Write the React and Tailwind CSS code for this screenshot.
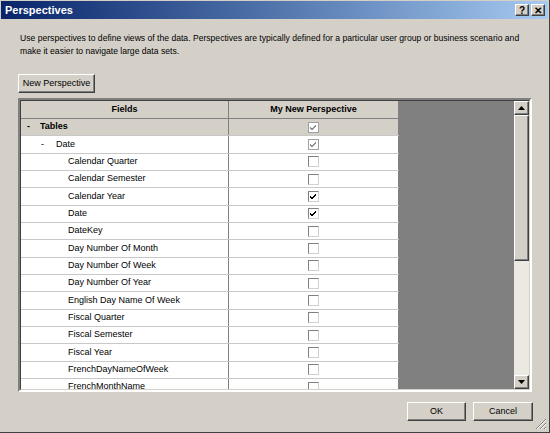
import React from 'react'

const rows = [
  { label: 'Tables', level: 0, toggle: true, state: 'grey' },
  { label: 'Date', level: 1, toggle: true, state: 'grey' },
  { label: 'Calendar Quarter', level: 2, state: 'off' },
  { label: 'Calendar Semester', level: 2, state: 'off' },
  { label: 'Calendar Year', level: 2, state: 'on' },
  { label: 'Date', level: 2, state: 'on' },
  { label: 'DateKey', level: 2, state: 'off' },
  { label: 'Day Number Of Month', level: 2, state: 'off' },
  { label: 'Day Number Of Week', level: 2, state: 'off' },
  { label: 'Day Number Of Year', level: 2, state: 'off' },
  { label: 'English Day Name Of Week', level: 2, state: 'off' },
  { label: 'Fiscal Quarter', level: 2, state: 'off' },
  { label: 'Fiscal Semester', level: 2, state: 'off' },
  { label: 'Fiscal Year', level: 2, state: 'off' },
  { label: 'FrenchDayNameOfWeek', level: 2, state: 'off' },
  { label: 'FrenchMonthName', level: 2, state: 'off' },
]

function Check({ state }) {
  const grey = state === 'grey'
  return (
    <div
      className={
        'w-[11px] h-[11px] border flex items-center justify-center bg-white ' +
        (grey ? 'border-[#a0a0a0]' : 'border-[#808080] border-r-[#d0d0d0] border-b-[#d0d0d0]')
      }
    >
      {state !== 'off' && (
        <svg width="9" height="9" viewBox="0 0 9 9">
          <path
            d="M1 4 L3 6 L7 2 M1 5 L3 7 L7 3"
            fill="none"
            stroke={grey ? '#8c8c8c' : '#000'}
            strokeWidth="1"
          />
        </svg>
      )}
    </div>
  )
}

function WinButton({ children, className = '' }) {
  return (
    <div
      className={
        'flex items-center justify-center bg-[#d4d0c8] border border-t-white border-l-white border-r-[#404040] border-b-[#404040] shadow-[inset_-1px_-1px_0_#808080] text-[9px] text-black ' +
        className
      }
    >
      {children}
    </div>
  )
}

export default function App() {
  return (
    <div
      className="w-[550px] h-[433px] bg-[#d4d0c8] flex flex-col border-r border-b border-[#404040] overflow-hidden relative"
      style={{ fontFamily: '"Liberation Sans", Arial, sans-serif' }}
    >
      {/* title bar */}
      <div className="h-[18px] mx-[1px] mt-[1px] bg-gradient-to-r from-[#0a246a] to-[#a6caf0] flex items-center justify-between pl-[4px] pr-[3px]">
        <span className="text-white font-bold text-[11px]">Perspectives</span>
        <div className="flex gap-[2px]">
          <WinButton className="w-[14px] h-[12px] font-bold text-[10px]">?</WinButton>
          <WinButton className="w-[14px] h-[12px] font-bold text-[10px]">✕</WinButton>
        </div>
      </div>

      <div className="pl-[20px] pr-[16px] pt-[13px] text-[8.6px] leading-[13px] text-black">
        Use perspectives to define views of the data. Perspectives are typically defined for a particular user group or business scenario and
        make it easier to navigate large data sets.
      </div>

      <div className="px-[18px] mt-[16px]">
        <WinButton className="w-[77px] h-[19px]">New Perspective</WinButton>
      </div>

      {/* grid */}
      <div className="ml-[18px] mt-[5px] w-[514px] h-[294px] border-2 border-t-[#808080] border-l-[#808080] border-r-white border-b-white">
        <div className="w-full h-full flex border border-t-[#404040] border-l-[#404040] border-r-[#d4d0c8] border-b-[#d4d0c8] overflow-hidden">
          <div className="w-[378px] flex flex-col">
            <div className="h-[18px] flex shrink-0 bg-[#d4d0c8] border-b border-[#808080]">
              <div className="w-[208px] flex items-center justify-center font-bold text-[9px] border-r border-[#808080]">
                Fields
              </div>
              <div className="flex-1 flex items-center justify-center font-bold text-[9px] border-r border-[#808080]">
                My New Perspective
              </div>
            </div>
            {rows.map((r, i) => (
              <div
                key={i}
                className={
                  'h-[17.33px] flex shrink-0 border-b border-[#c8c8c8] text-[9px] ' +
                  (r.level === 0 ? 'bg-[#d4d0c8]' : 'bg-white')
                }
              >
                <div className="w-[208px] flex items-center border-r border-[#808080]">
                  {r.level === 0 && (
                    <>
                      <span className="w-[19px] pl-[6px] font-bold">-</span>
                      <span className="font-bold">{r.label}</span>
                    </>
                  )}
                  {r.level === 1 && (
                    <>
                      <span className="w-[35px] pl-[20px]">-</span>
                      <span>{r.label}</span>
                    </>
                  )}
                  {r.level === 2 && <span className="pl-[47px]">{r.label}</span>}
                </div>
                <div className="flex-1 flex items-center justify-center border-r border-[#808080]">
                  <Check state={r.state} />
                </div>
              </div>
            ))}
          </div>
          <div className="flex-1 bg-[#808080]" />
          {/* scrollbar */}
          <div className="w-[15px] flex flex-col bg-[#ece9e2]">
            <WinButton className="h-[14px] shrink-0">
              <svg width="7" height="4" viewBox="0 0 7 4">
                <path d="M3.5 0 L7 4 L0 4 Z" fill="#000" />
              </svg>
            </WinButton>
            <WinButton className="h-[146px] shrink-0" />
            <div className="flex-1" />
            <WinButton className="h-[14px] shrink-0">
              <svg width="7" height="4" viewBox="0 0 7 4">
                <path d="M0 0 L7 0 L3.5 4 Z" fill="#000" />
              </svg>
            </WinButton>
          </div>
        </div>
      </div>

      <div className="flex justify-end gap-[7px] pr-[16px] mt-[10px]">
        <WinButton className="w-[59px] h-[19px] border-[#000] shadow-[inset_-1px_-1px_0_#404040,inset_1px_1px_0_#fff]">
          OK
        </WinButton>
        <WinButton className="w-[60px] h-[19px]">Cancel</WinButton>
      </div>

      {/* resize grip */}
      <svg className="absolute right-[2px] bottom-[2px]" width="12" height="12" viewBox="0 0 12 12">
        <path d="M11 1 L1 11 M11 5 L5 11 M11 9 L9 11" stroke="#808080" strokeWidth="1" />
        <path d="M11 2 L2 11 M11 6 L6 11 M11 10 L10 11" stroke="#fff" strokeWidth="1" />
      </svg>
    </div>
  )
}
